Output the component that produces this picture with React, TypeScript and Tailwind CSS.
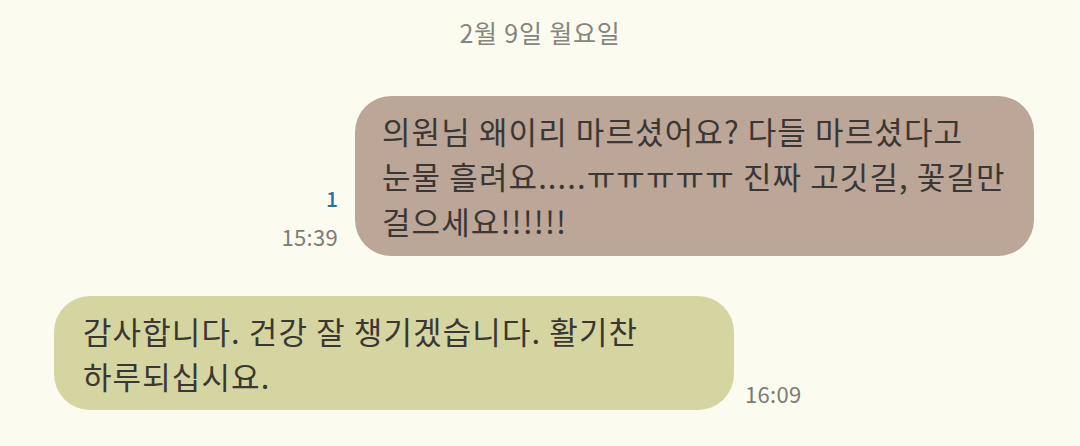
import React from "react";

const font = { fontFamily: '"Noto Sans CJK KR", "Noto Sans", sans-serif' };

export default function App() {
  return (
    <div className="w-[1080px] h-[446px] bg-[#fbfbf0] overflow-hidden flex flex-col" style={font}>
      <div className="h-[66px] flex items-center justify-center">
        <span className="text-[25px] leading-none text-[#85857d] tracking-[0.8px] -mt-[1px]">2월 9일 월요일</span>
      </div>
      <div className="mt-[30px] flex justify-end items-end pr-[46px] gap-[17px]">
        <div className="flex flex-col items-end pb-[6px] text-[22px] leading-[28px]">
          <span className="text-[#2c6f9b] font-medium text-[21px]">1</span>
          <span className="text-[#7c7c76] mt-[10px] tracking-[0.3px]">15:39</span>
        </div>
        <div className="w-[679px] h-[160px] rounded-[36px] bg-[#bba697] pl-[27px] pt-[12px] text-[31px] leading-[45px] text-[#3a3734] tracking-[1.1px]">
          의원님 왜이리 마르셨어요? 다들 마르셨다고
          <br />
          눈물 흘려요.....ㅠㅠㅠㅠㅠ 진짜 고깃길, 꽃길만
          <br />
          걸으세요!!!!!!
        </div>
      </div>
      <div className="mt-[40px] flex items-end pl-[54px] gap-[11px]">
        <div className="w-[680px] h-[114px] rounded-[36px] bg-[#d4d5a0] pl-[29px] pt-[12px] text-[31px] leading-[45px] text-[#3a3734] tracking-[1.1px]">
          감사합니다. 건강 잘 챙기겠습니다. 활기찬
          <br />
          하루되십시요.
        </div>
        <span className="text-[22px] leading-[28px] text-[#7c7c76] pb-[3px] tracking-[0.3px]">16:09</span>
      </div>
    </div>
  );
}
